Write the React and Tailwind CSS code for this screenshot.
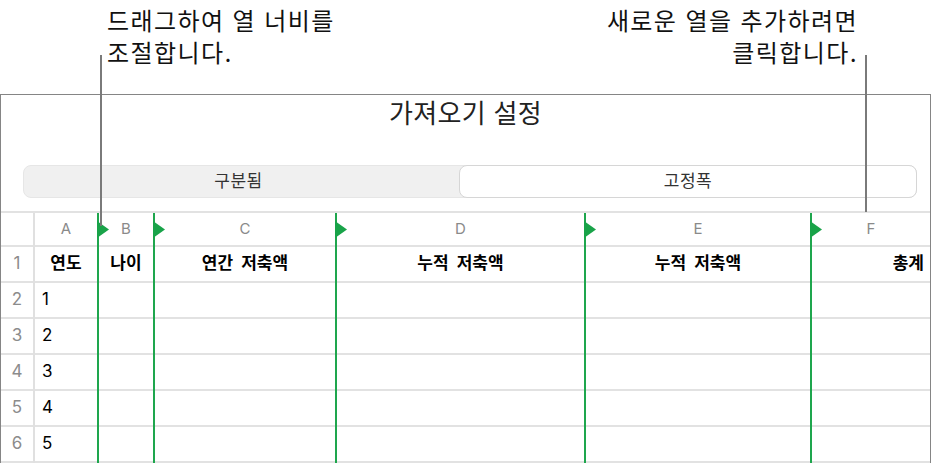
import React from "react";

const FONT = { fontFamily: '"Inter", "Noto Sans CJK KR", sans-serif' };

function Tri() {
  return (
    <svg className="absolute left-[-2px] top-[8px]" width="12" height="17" viewBox="0 0 12 17">
      <polygon points="0,0 12,8.5 0,17" fill="#19a349" />
    </svg>
  );
}

function Column({ letter, width, green, header, headerAlign = "center", cells = [], tri }) {
  const border = green ? "border-l-2 border-[#1ea64d]" : "border-l-2 border-[#e0e0e0]";
  return (
    <div className={`flex flex-col shrink-0 ${border} ${width}`}>
      <div className="relative h-[34px] border-b-2 border-[#e2e2e2] flex items-center justify-center text-[15px] text-[#8a8a8a]">
        {tri && <Tri />}
        {letter}
      </div>
      <div
        className={`h-[36px] border-b-2 border-[#e2e2e2] flex items-center text-[17px] font-bold text-black whitespace-pre ${
          headerAlign === "right" ? "justify-end pr-[6px]" : "justify-center"
        }`}
      >
        {header}
      </div>
      {[0, 1, 2, 3, 4].map((i) => (
        <div key={i} className="h-[36px] border-b-2 border-[#e2e2e2] flex items-center pl-[7px] text-[17px] text-black">
          {cells[i] || ""}
        </div>
      ))}
    </div>
  );
}

export default function App() {
  return (
    <div className="relative w-[931px] h-[463px] overflow-hidden bg-white" style={FONT}>
      {/* callouts */}
      <div className="h-[94px] flex justify-between pl-[107px] pr-[73px] pt-[6px] text-[24px] leading-[32px] tracking-[1.4px] text-[#111]">
        <div>
          <div>드래그하여 열 너비를</div>
          <div>조절합니다.</div>
        </div>
        <div className="text-right">
          <div>새로운 열을 추가하려면</div>
          <div>클릭합니다.</div>
        </div>
      </div>

      {/* panel */}
      <div className="h-[369px] border-t border-l border-r border-[#858585] flex flex-col">
        <div className="h-[38px] leading-[38px] text-center text-[26px] tracking-[0.3px] text-[#222]">가져오기 설정</div>

        <div className="mt-[32px] ml-[22px] w-[894px] h-[34px] flex rounded-[8px] bg-[#f0f0f0] border border-[#e6e6e6] text-[17px] tracking-[0.5px] text-[#333]">
          <div className="flex-1 flex items-center justify-center pr-[6px]">구분됨</div>
          <div className="w-[458px] -my-px -mr-px flex items-center justify-center bg-white rounded-[8px] border border-[#d6d6d6]">
            고정폭
          </div>
        </div>

        <div className="mt-[13px] border-t-2 border-[#e2e2e2] flex flex-1">
          {/* row numbers */}
          <div className="w-[32px] shrink-0 flex flex-col text-[17px] text-[#8c8c8c]">
            <div className="h-[34px] border-b-2 border-[#e2e2e2]" />
            {[1, 2, 3, 4, 5, 6].map((n) => (
              <div key={n} className="h-[36px] border-b-2 border-[#e2e2e2] flex items-center justify-center">
                {n}
              </div>
            ))}
          </div>
          <Column letter="A" width="w-[64px]" header="연도" cells={["1", "2", "3", "4", "5"]} />
          <Column letter="B" width="w-[56px]" green tri header="나이" />
          <Column letter="C" width="w-[182px]" green tri header={"연간  저축액"} />
          <Column letter="D" width="w-[249px]" green tri header={"누적  저축액"} />
          <Column letter="E" width="w-[226px]" green tri header={"누적  저축액"} />
          <div className="flex-1 flex">
            <Column letter="F" width="w-full" green tri header="총계" headerAlign="right" />
          </div>
        </div>
      </div>

      {/* callout lines */}
      <div className="absolute left-[100px] top-[55px] w-[2px] h-[171px] bg-[#7a7a7a]" />
      <div className="absolute left-[865px] top-[55px] w-[2px] h-[157px] bg-[#7a7a7a]" />
    </div>
  );
}
